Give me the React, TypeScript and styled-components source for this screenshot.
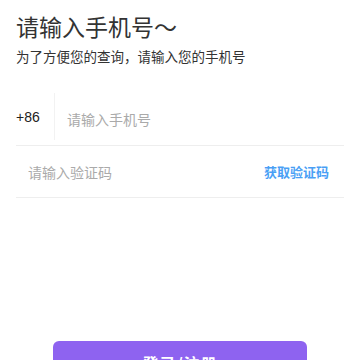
import React from 'react';
import styled, { createGlobalStyle } from 'styled-components';

const GlobalStyle = createGlobalStyle`
  html, body {
    margin: 0;
    padding: 0;
    background: #ffffff;
    font-family: 'Noto Sans CJK SC', 'Liberation Sans', sans-serif;
  }
`;

const Page = styled.div`
  padding: 9px 16px 0;
  box-sizing: border-box;
  width: 360px;
`;

const Title = styled.h1`
  margin: 0;
  font-size: 23px;
  line-height: 34px;
  font-weight: 400;
  color: #333333;
`;

const Subtitle = styled.p`
  margin: 3px 0 0;
  font-size: 13.5px;
  line-height: 20px;
  color: #333333;
`;

const Form = styled.div`
  margin-top: 27px;
`;

const Row = styled.div<{ $height: number }>`
  display: flex;
  align-items: center;
  height: ${(p) => p.$height}px;
  border-bottom: 1px solid #eeeeee;
`;

const Prefix = styled.div`
  width: 38px;
  align-self: stretch;
  display: flex;
  align-items: center;
  font-family: 'Liberation Sans', sans-serif;
  font-size: 14px;
  color: #222222;
  border-right: 1px solid #f2f2f2;
  margin-bottom: 5px;
`;

const Input = styled.input`
  flex: 1;
  min-width: 0;
  border: none;
  outline: none;
  padding: 0 0 0 12px;
  background: transparent;
  font-family: 'Noto Sans CJK SC', sans-serif;
  font-size: 14px;
  color: #333333;

  &::placeholder {
    color: #aaaaaa;
  }
`;

const CodeAction = styled.button`
  border: none;
  background: none;
  padding: 0 15px 0 0;
  font-family: 'Noto Sans CJK SC', sans-serif;
  font-size: 13px;
  font-weight: 700;
  color: #4a9ff5;
  cursor: pointer;
`;

const Submit = styled.button`
  display: block;
  margin: 143px auto 0;
  width: 254px;
  height: 44px;
  border: none;
  border-radius: 6px;
  background: #8e63f0;
  color: #ffffff;
  font-family: 'Noto Sans CJK SC', sans-serif;
  font-size: 16px;
  font-weight: 700;
  padding: 0;
  letter-spacing: 1px;
`;

export default function App() {
  return (
    <>
      <GlobalStyle />
      <Page>
        <Title>请输入手机号～</Title>
        <Subtitle>为了方便您的查询，请输入您的手机号</Subtitle>
        <Form>
          <Row $height={52}>
            <Prefix>+86</Prefix>
            <Input placeholder="请输入手机号" />
          </Row>
          <Row $height={51}>
            <Input placeholder="请输入验证码" />
            <CodeAction>获取验证码</CodeAction>
          </Row>
        </Form>
        <Submit>登录/注册</Submit>
      </Page>
    </>
  );
}
